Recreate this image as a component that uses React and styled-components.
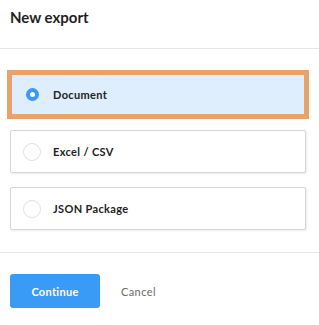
import React, { useState } from 'react'
import styled, { createGlobalStyle } from 'styled-components'

const GlobalStyle = createGlobalStyle`
  body {
    margin: 0;
    background: #fff;
    font-family: Lato, "Open Sans", sans-serif;
    color: #222;
  }
`

const Dialog = styled.div`
  width: 319px;
  height: 325px;
  background: #fff;
`

const Header = styled.div`
  height: 49px;
  padding: 0 10px;
  display: flex;
  align-items: center;
  border-bottom: 1px solid #e6e6e6;
  box-sizing: border-box;
`

const Title = styled.h1`
  margin: 0;
  margin-top: -14px;
  font-size: 15px;
  font-weight: 700;
  color: #1f1f1f;
`

const OptionList = styled.div`
  display: flex;
  flex-direction: column;
  gap: 14px;
  padding: 24px 13px 22px 10px;
  border-bottom: 1px solid #e6e6e6;
`

const Option = styled.label`
  height: 43px;
  display: flex;
  align-items: center;
  gap: 12px;
  padding: 0 12px;
  box-sizing: border-box;
  border: 1px solid ${p => (p.$selected ? '#d7e7f8' : '#d6d6d6')};
  border-radius: ${p => (p.$selected ? '0' : '2px')};
  background: ${p => (p.$selected ? '#deeefc' : '#fff')};
  box-shadow: 1px 1px 2px rgba(0, 0, 0, 0.08);
  outline: ${p => (p.$selected ? '5px solid #e8a36b' : 'none')};
  outline-offset: -2px;
  cursor: pointer;
`

const RadioSlot = styled.span`
  width: 18px;
  height: 18px;
  display: flex;
  align-items: center;
  justify-content: center;
  flex-shrink: 0;
`

const RadioMark = styled.span`
  box-sizing: border-box;
  border-radius: 50%;
  width: ${p => (p.$checked ? '13px' : '18px')};
  height: ${p => (p.$checked ? '13px' : '18px')};
  border: ${p => (p.$checked ? '4px solid #3a98f8' : '1px solid #e2e2e2')};
  background: #fff;
`

const OptionLabel = styled.span`
  font-size: 11px;
  font-weight: 700;
  letter-spacing: 0.35px;
  color: #222;
`

const Footer = styled.div`
  display: flex;
  align-items: center;
  gap: 21px;
  padding: 21px 10px;
`

const PrimaryButton = styled.button`
  width: 90px;
  height: 34px;
  border: none;
  border-radius: 3px;
  background: #3a9bf6;
  color: #fff;
  font-family: inherit;
  font-size: 11px;
  font-weight: 700;
  letter-spacing: 0.3px;
  cursor: pointer;
`

const TextButton = styled.button`
  border: none;
  background: none;
  padding: 0;
  font-family: inherit;
  font-size: 11px;
  letter-spacing: 0.4px;
  color: #6b6b6b;
  cursor: pointer;
`

const options = ['Document', 'Excel / CSV', 'JSON Package']

export default function App() {
  const [selected, setSelected] = useState('Document')

  return (
    <Dialog>
      <GlobalStyle />
      <Header>
        <Title>New export</Title>
      </Header>
      <OptionList>
        {options.map(name => (
          <Option key={name} $selected={selected === name} onClick={() => setSelected(name)}>
            <RadioSlot>
              <RadioMark $checked={selected === name} />
            </RadioSlot>
            <OptionLabel>{name}</OptionLabel>
          </Option>
        ))}
      </OptionList>
      <Footer>
        <PrimaryButton>Continue</PrimaryButton>
        <TextButton>Cancel</TextButton>
      </Footer>
    </Dialog>
  )
}
